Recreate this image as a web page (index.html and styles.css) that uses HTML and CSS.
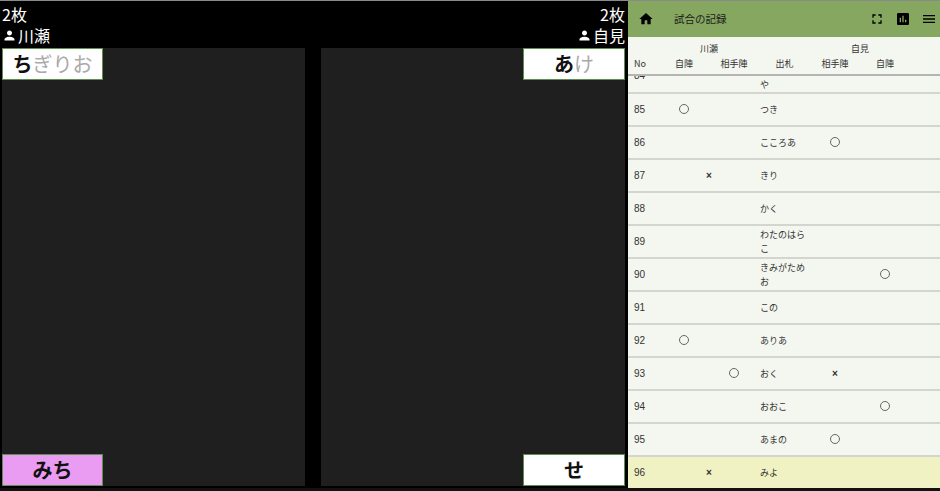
FILE: index.html
```html
<!DOCTYPE html>
<html lang="ja">
<head>
  <meta charset="UTF-8">
  <title>試合の記録</title>
  <link rel="stylesheet" href="styles.css">
</head>
<body>
  <div class="app">
    <!-- Match board -->
    <div class="board">
      <div class="players">
        <div class="player">
          <div>2枚</div>
          <div class="player-name">
            <svg class="person" viewBox="0 0 24 24"><path d="M12 12c2.21 0 4-1.79 4-4s-1.79-4-4-4-4 1.79-4 4 1.79 4 4 4zm0 2c-2.67 0-8 1.34-8 4v2h16v-2c0-2.66-5.33-4-8-4z"/></svg>川瀬
          </div>
        </div>
        <div class="player player-right">
          <div>2枚</div>
          <div class="player-name">
            <svg class="person" viewBox="0 0 24 24"><path d="M12 12c2.21 0 4-1.79 4-4s-1.79-4-4-4-4 1.79-4 4 1.79 4 4 4zm0 2c-2.67 0-8 1.34-8 4v2h16v-2c0-2.66-5.33-4-8-4z"/></svg>自見
          </div>
        </div>
      </div>
      <div class="courts">
        <div class="court">
          <div class="card"><b>ち</b><span class="rest">ぎりお</span></div>
          <div class="card card-pink"><b>みち</b></div>
        </div>
        <div class="court court-right">
          <div class="card"><b>あ</b><span class="rest">け</span></div>
          <div class="card"><b>せ</b></div>
        </div>
      </div>
    </div>

    <!-- Record panel -->
    <div class="panel">
      <div class="toolbar">
        <svg class="icon" viewBox="0 0 24 24"><path d="M10 20v-6h4v6h5v-8h3L12 3 2 12h3v8z"/></svg>
        <div class="toolbar-title">試合の記録</div>
        <svg class="icon" viewBox="0 0 24 24"><path d="M7 14H5v5h5v-2H7v-3zm-2-4h2V7h3V5H5v5zm12 7h-3v2h5v-5h-2v3zM14 5v2h3v3h2V5h-5z"/></svg>
        <svg class="icon" viewBox="0 0 24 24"><path d="M19 3H5c-1.1 0-2 .9-2 2v14c0 1.1.9 2 2 2h14c1.1 0 2-.9 2-2V5c0-1.1-.9-2-2-2zM9 17H7v-7h2v7zm4 0h-2V7h2v10zm4 0h-2v-4h2v4z"/></svg>
        <svg class="icon" viewBox="0 0 24 24"><path d="M3 18h18v-2H3v2zm0-5h18v-2H3v2zm0-7v2h18V6H3z"/></svg>
      </div>

      <div class="head">
        <div class="head-name name-left">川瀬</div>
        <div class="head-name name-right">自見</div>
        <div class="head-no">No</div>
        <div class="mid">自陣</div>
        <div class="mid">相手陣</div>
        <div class="mid">出札</div>
        <div class="mid">相手陣</div>
        <div class="mid">自陣</div>
      </div>

      <div class="rows">
        <div class="row row-cut"><div>84</div><div class="fuda">や</div></div>
        <div class="row"><div>85</div><div class="c1"><i class="maru"></i></div><div class="fuda">つき</div></div>
        <div class="row"><div>86</div><div class="fuda">こころあ</div><div class="c4"><i class="maru"></i></div></div>
        <div class="row"><div>87</div><div class="cross-left">×</div><div class="fuda">きり</div></div>
        <div class="row"><div>88</div><div class="fuda">かく</div></div>
        <div class="row"><div>89</div><div class="fuda">わたのはらこ</div></div>
        <div class="row"><div>90</div><div class="fuda">きみがためお</div><div class="c5"><i class="maru"></i></div></div>
        <div class="row"><div>91</div><div class="fuda">この</div></div>
        <div class="row"><div>92</div><div class="c1"><i class="maru"></i></div><div class="fuda">ありあ</div></div>
        <div class="row"><div>93</div><div class="c2"><i class="maru"></i></div><div class="fuda">おく</div><div class="c4 cross">×</div></div>
        <div class="row"><div>94</div><div class="fuda">おおこ</div><div class="c5"><i class="maru"></i></div></div>
        <div class="row"><div>95</div><div class="fuda">あまの</div><div class="c4"><i class="maru"></i></div></div>
        <div class="row row-now"><div>96</div><div class="cross-left">×</div><div class="fuda">みよ</div></div>
      </div>
    </div>
  </div>
</body>
</html>
```

FILE: styles.css
```css
/* General Styles */
html, body {
  height: 100%;
}

body {
  margin: 0;
  background-color: #121212;
  font-family: 'Noto Sans CJK JP', 'Noto Sans', sans-serif;
  overflow: hidden;
}

.app {
  display: flex;
  height: 488px;
  background-color: #000;
  border-top: 1px solid #8a8a8a;
  box-sizing: border-box;
}

/* Board */
.board {
  width: 625px;
  display: flex;
  flex-direction: column;
  margin-right: 3px;
}

.players {
  height: 47px;
  display: flex;
  justify-content: space-between;
  color: #fff;
  font-size: 16px;
  line-height: 21px;
  padding: 3px 0 0 2px;
  box-sizing: border-box;
}

.player-right {
  text-align: right;
}

.player-name {
  display: flex;
  align-items: center;
  gap: 1px;
}

.person {
  width: 15px;
  height: 15px;
  fill: #fff;
}

.courts {
  flex: 1;
  display: flex;
  justify-content: space-between;
  padding: 0 0 2px 2px;
}

.court {
  width: 303px;
  display: flex;
  flex-direction: column;
  justify-content: space-between;
  background-color: #1f1f1f;
}

.court-right {
  width: 304px;
  align-items: flex-end;
}

.card {
  width: 101px;
  height: 32px;
  box-sizing: border-box;
  border: 1px solid #5f8f50;
  background-color: #fff;
  color: #111;
  font-size: 20px;
  line-height: 29px;
  text-align: center;
}

.court-right .card {
  width: 102px;
}

.card-pink {
  background-color: #ea9cf3;
}

.card .rest {
  color: #aaa;
}

/* Record panel */
.panel {
  width: 312px;
  display: flex;
  flex-direction: column;
  background-color: #f4f6f0;
  color: #333;
  font-size: 9px;
  overflow: hidden;
}

.toolbar {
  height: 36px;
  flex-shrink: 0;
  display: flex;
  align-items: center;
  gap: 10px;
  padding: 0 3px 0 10px;
  background-color: #86a75f;
}

.toolbar-title {
  flex: 1;
  margin-left: 10px;
  color: #1c1c1c;
  font-size: 10.5px;
  line-height: 34px;
}

.icon {
  width: 16px;
  height: 16px;
  fill: #000;
}

.head {
  height: 39px;
  flex-shrink: 0;
  display: grid;
  grid-template-columns: 31px 50px 50px 51px 50px 50px 30px;
  grid-template-rows: 15px 14px;
  padding-top: 5px;
  box-sizing: border-box;
  border-bottom: 2px solid #b5b5b5;
  line-height: 14px;
  text-align: center;
}

.head-name {
  grid-row: 1;
}

.name-left {
  grid-column: 2 / 4;
}

.name-right {
  grid-column: 5 / 7;
}

.head-no {
  grid-row: 2;
  text-align: left;
  padding-left: 6px;
}

.mid {
  grid-row: 2;
}

.rows {
  flex: 1;
  overflow: hidden;
}

.row {
  height: 33px;
  box-sizing: border-box;
  display: grid;
  grid-template-columns: 31px 50px 50px 51px 50px 50px 30px;
  align-items: center;
  border-bottom: 2px solid #d3d5ce;
  line-height: 14px;
  text-align: center;
}

.row > div:first-child {
  grid-column: 1;
  text-align: left;
  padding-left: 6px;
  font-family: 'Liberation Sans', sans-serif;
  font-size: 10px;
}

.row-cut {
  height: 18px;
  align-items: end;
  overflow: hidden;
}

.row-cut > div:first-child {
  height: 4px;
  line-height: 0;
  align-self: start;
}

.row-now {
  background-color: #f0f2c4;
}

.fuda {
  grid-column: 4;
  grid-row: 1;
  text-align: left;
  padding-left: 1px;
}

.c1 { grid-column: 2; grid-row: 1; }
.c2 { grid-column: 3; grid-row: 1; }
.c4 { grid-column: 5; grid-row: 1; }
.c5 { grid-column: 6; grid-row: 1; }
.cross-left { grid-column: 2 / 4; grid-row: 1; }

.cross, .cross-left {
  font-family: 'Liberation Sans', sans-serif;
  font-size: 10px;
  font-weight: bold;
}

.maru {
  display: block;
  width: 8px;
  height: 8px;
  margin: -1px auto 0;
  border: 1px solid #666;
  border-radius: 50%;
}
```
